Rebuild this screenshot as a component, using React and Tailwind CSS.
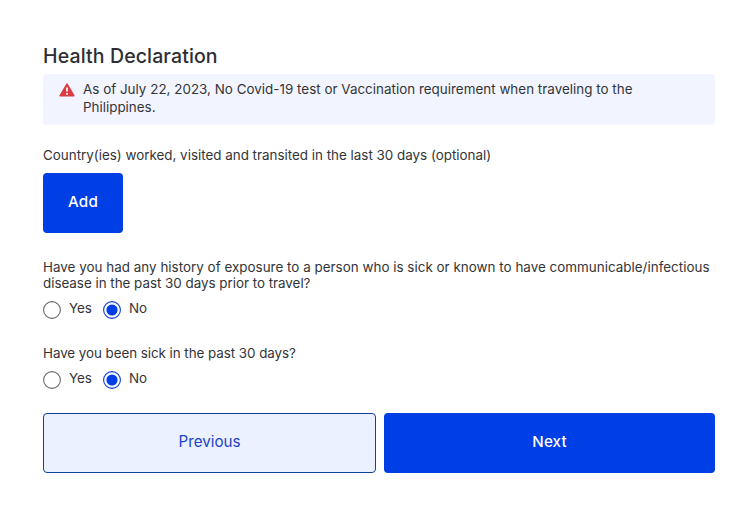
function Radio({ label, checked }) {
  return (
    <label className="flex h-5 items-start">
      <svg viewBox="0 0 18 18" className="mt-px size-[18px] shrink-0">
        <circle cx="9" cy="9" r="8.4" fill="#fff" stroke={checked ? "#0b3fd0" : "#6b6b6b"} strokeWidth="1.1" />
        {checked && <circle cx="9" cy="9" r="5.6" fill="#003ee6" />}
      </svg>
      <span className="ml-2 leading-4 tracking-[-0.1px]">{label}</span>
    </label>
  );
}

function YesNo() {
  return (
    <div className="flex">
      <div className="w-[60px]"><Radio label="Yes" /></div>
      <Radio label="No" checked />
    </div>
  );
}

export default function App() {
  return (
    <main className="h-[513px] w-[751px] bg-white pt-[43px] pl-[43px] font-['Inter',sans-serif] text-[13.4px] text-[#333438]">
      <div className="w-[672px]">
        <h1 className="h-[31px] text-[19.5px] leading-[26px] font-medium tracking-[0.13px] text-[#2d2e33]">
          <span>Health Declaration</span>
        </h1>
        <div className="flex h-[51px] rounded-[4px] bg-[#f2f4ff] pt-[6px] pl-4">
          <svg viewBox="0 0 16 14" className="mt-[3px] mr-2 h-[14px] w-4 shrink-0">
            <path d="M8 1.2 14.8 12.7H1.2Z" fill="#d93d42" stroke="#d93d42" strokeWidth="1.6" strokeLinejoin="round" />
            <path d="M8 4.6v3.9M8 10v1.8" stroke="#fff" strokeWidth="1.7" />
          </svg>
          <p className="leading-[18px] whitespace-nowrap">
            <span className="tracking-[0.02px]">As of July 22, 2023, No Covid-19 test or Vaccination requirement when traveling to the</span>
            <br />
            <span>Philippines.</span>
          </p>
        </div>
        <p className="mt-[22px] leading-4">
          <span>Country(ies) worked, visited and transited in the last 30 days (optional)</span>
        </p>
        <button className="mt-[10px] block h-[60px] w-20 rounded-[4px] bg-[#003ee6] pb-px text-[15.2px] font-medium tracking-[0.2px] text-white">
          Add
        </button>
        <p className="mt-[26px] mb-[9px] leading-4 whitespace-nowrap">
          <span className="tracking-[0.022px]">Have you had any history of exposure to a person who is sick or known to have communicable/infectious</span>
          <br />
          <span className="tracking-[-0.02px]">disease in the past 30 days prior to travel?</span>
        </p>
        <YesNo />
        <p className="mt-[25px] mb-[9px] leading-4">
          <span className="tracking-[-0.055px]">Have you been sick in the past 30 days?</span>
        </p>
        <YesNo />
        <div className="mt-[23px] flex gap-2 text-[15.2px]">
          <button className="h-[60px] w-[333px] rounded-[4px] border border-[#123f9c] bg-[#ebf1ff] pb-px text-[#1d43c5]">
            Previous
          </button>
          <button className="h-[60px] w-[331px] rounded-[4px] bg-[#003ee6] pb-px font-medium tracking-[0.1px] text-white">
            Next
          </button>
        </div>
      </div>
    </main>
  );
}
